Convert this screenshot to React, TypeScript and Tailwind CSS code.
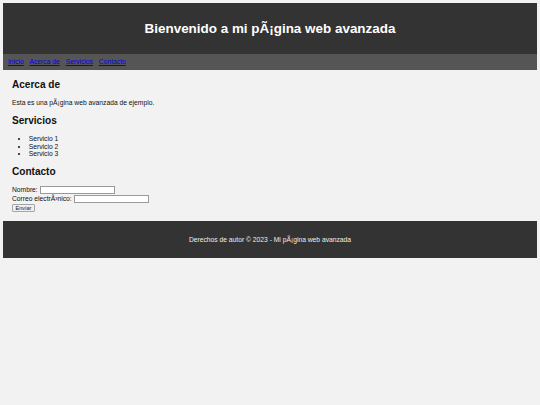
export default function App() {
  const body = "text-[6.72px] leading-[7.72px]";
  const h2 = "text-[10.08px] leading-[11.6px] font-bold mt-[8.4px]";
  return (
    <div className="min-h-[405px] bg-[#f2f2f2] p-[3.36px] font-['Liberation_Sans',Arial,sans-serif] text-[#111]">
      <header className="bg-[#333333] text-white px-[8.4px] py-[8.4px] text-center">
        <h1 className="my-[9px] text-[13.44px] leading-[15.45px] font-bold">
          Bienvenido a mi pÃ¡gina web avanzada
        </h1>
      </header>
      <nav className="bg-[#555555] px-[4.6px] py-[4.2px] flex gap-[5.9px] text-[6.72px] leading-[7.72px]">
        <a href="#inicio" className="text-[#0000ee] underline">Inicio</a>
        <a href="#acerca" className="text-[#0000ee] underline">Acerca de</a>
        <a href="#servicios" className="text-[#0000ee] underline">Servicios</a>
        <a href="#contacto" className="text-[#0000ee] underline">Contacto</a>
      </nav>
      <main className="px-[8.6px] pb-[8.4px] pt-[1px]">
        <section>
          <h2 className={h2}>Acerca de</h2>
          <p className={`${body} mt-[8.4px]`}>Esta es una pÃ¡gina web avanzada de ejemplo.</p>
        </section>
        <section>
          <h2 className={h2}>Servicios</h2>
          <ul className="text-[6.72px] leading-[7.4px] mt-[8.4px] pl-[16.8px] list-disc">
            <li>Servicio 1</li>
            <li>Servicio 2</li>
            <li>Servicio 3</li>
          </ul>
        </section>
        <section>
          <h2 className={h2}>Contacto</h2>
          <form className={`${body} mt-[8.4px] flex flex-col`} onSubmit={(e) => e.preventDefault()}>
            <div className="flex items-center h-[8.8px] gap-[1.8px]">
              <label>Nombre:</label>
              <input type="text" className="w-[75px] h-[8.2px] border border-[#9a9a9a] bg-white" />
            </div>
            <div className="flex items-center h-[8.8px] gap-[1.8px]">
              <label>Correo electrÃ³nico:</label>
              <input type="email" className="w-[75px] h-[8.2px] border border-[#9a9a9a] bg-white" />
            </div>
            <div className="flex items-center h-[8.8px]">
              <button
                type="submit"
                className="w-[23px] h-[8.4px] border border-[#a5a5a5] bg-[#efefef] rounded-[1px] text-[5.6px] leading-[6px] text-[#222] flex items-center justify-center"
              >
                Enviar
              </button>
            </div>
          </form>
        </section>
      </main>
      <footer className="bg-[#333333] text-white text-center p-[8.4px]">
        <p className="my-[6.72px] text-[6.72px] leading-[7.72px] text-[#eeeeee]">
          Derechos de autor © 2023 - Mi pÃ¡gina web avanzada
        </p>
      </footer>
    </div>
  );
}
